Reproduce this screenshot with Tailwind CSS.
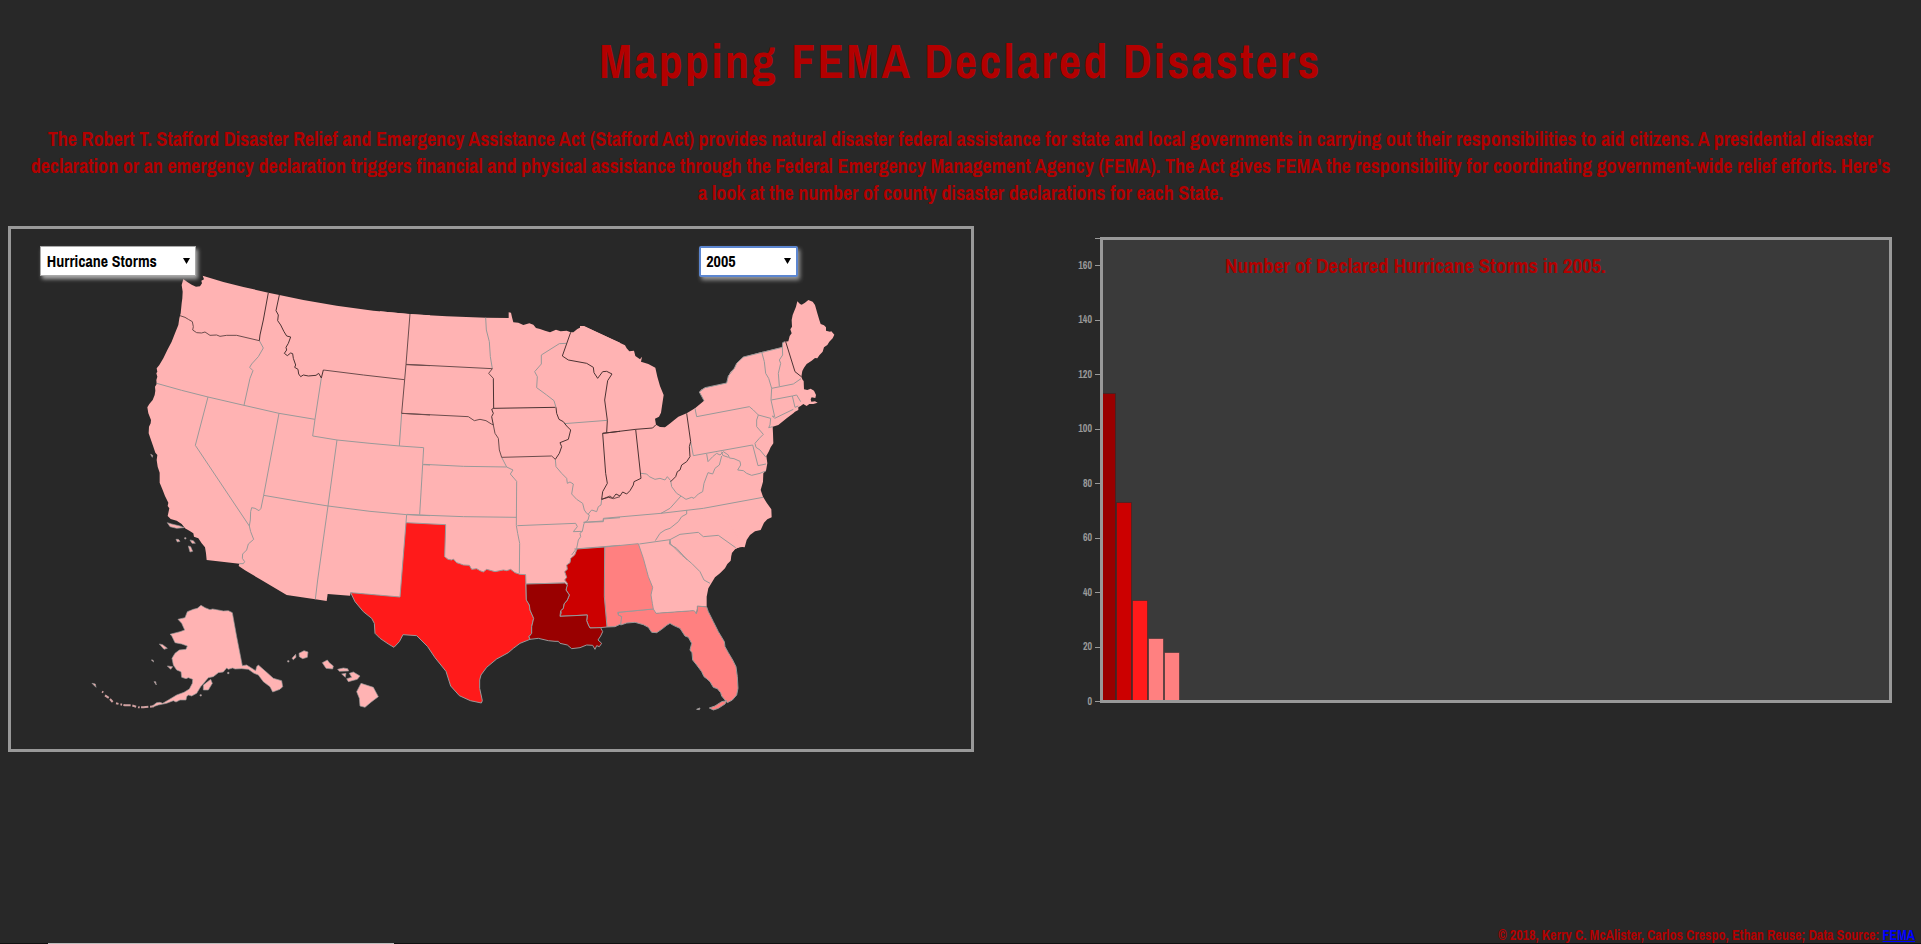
<!DOCTYPE html>
<html lang="en">
<head>
<meta charset="utf-8">
<meta name="viewport" content="width=device-width, initial-scale=1">
<title>Mapping FEMA Declared Disasters</title>
<script src="https://cdn.jsdelivr.net/npm/@tailwindcss/browser@4"></script>
</head>
<body class="bg-[#282828] text-[#b30000] font-bold font-['Archivo_Narrow','Liberation_Sans_Narrow','Liberation_Sans',sans-serif]">
<div class="relative flex min-h-screen flex-col px-2">
  <header class="text-center">
    <h1 class="pt-[33px] text-[48px] leading-[56px] tracking-wider">Mapping FEMA Declared Disasters</h1>
    <p class="mt-9 text-[20px] leading-[27px]">The Robert T. Stafford Disaster Relief and Emergency Assistance Act (Stafford Act) provides natural disaster federal assistance for state and local governments in carrying out their responsibilities to aid citizens. A presidential disaster declaration or an emergency declaration triggers financial and physical assistance through the Federal Emergency Management Agency (FEMA). The Act gives FEMA the responsibility for coordinating government-wide relief efforts. Here's a&nbsp;look at the number of county disaster declarations for each State.</p>
  </header>

  <main class="mt-5 grid items-start lg:grid-cols-[966fr_939fr]">
    <section class="relative border-3 border-[#999]" aria-label="Map of declarations">
      <svg class="block w-full" viewBox="11 229 960 520" stroke-linejoin="round" role="img" aria-label="United States by number of declarations">
        <!-- land -->
        <g fill="#ffb3b3" stroke="#999" stroke-width="2">
          <g stroke="none">
            <path transform="translate(130 260) scale(.33333)" d="M160 57L172 66 185 74 198 80 210 79 216 70 214 62 222 58 218 47 280 66 340 81 415 98 448 105 520 120 620 137 730 152 840 162 900 166 900 1012 810 1012 662 998 660 1007 593 1002 590 1023 556 1018 470 1005 389 957 345 931 326 918 328 911 250 902 230 900 228 880 225 862 215 850 205 835 192 830 190 820 178 812 165 805 155 792 140 782 122 777 113 768 118 745 113 738 115 728 105 708 98 690 89 668 89 638 83 620 80 600 82 585 76 578 70 560 63 540 56 520 57 500 62 490 63 480 55 460 52 442 58 432 68 420 74 405 76 392 75 380 80 372 79 360 82 350 79 340 82 335 80 325 88 315 100 295 112 270 125 245 135 220 145 195 148 175 152 160 155 130 157 115 158 95 155 75Z"/>
            <path transform="translate(380 290) scale(.33333)" d="M0 64L91 73 200 79 317 83 386 84 386 67 393 68 396 82 400 97 415 98 430 105 448 100 460 104 468 114 480 117 495 122 510 127 528 119 542 124 560 122 572 127 580 127 592 117 610 108 720 158 720 960 0 960Z"/>
            <path transform="translate(580 300) scale(.33333)" d="M0 78L12 78 135 136 140 145 148 154 162 152 166 168 180 178 186 170 183 185 205 192 226 203 232 230 240 258 251 285 246 318 243 338 237 350 225 356 228 374 240 381 255 382 268 372 280 362 295 350 320 340 345 325 365 308 372 302 365 288 358 276 365 268 375 263 440 249 445 228 452 215 463 205 470 190 490 171 545 156 607 142 608 128 615 125 625 124 629 108 635 100 631 88 636 80 635 60 638 45 648 20 652 4 660 12 665 14 675 8 685 0 698 5 705 15 712 40 718 60 722 72 732 76 738 82 738 92 750 95 754 94 763 104 758 115 748 125 742 135 732 142 728 155 718 166 712 175 705 174 695 182 680 192 672 203 667 213 664 230 668 240 671 243 672 268 682 270 692 266 702 272 708 285 706 294 695 292 692 298 694 305 705 304 713 308 700 312 688 312 680 318 670 312 662 318 655 322 655 330 645 335 640 340 620 355 595 375 578 380 579 400 580 430 572 442 566 455 559 468 562 490 558 512 550 520 549 545 542 570 549 590 560 608 574 628 575 652 562 658 552 668 542 690 525 694 510 705 500 720 494 742 480 740 465 748 455 760 450 780 0 780Z"/>
            <path transform="translate(480 500) scale(.33333)" d="M0 0L700 0 793 140 780 142 765 146 755 158 752 182 742 192 735 205 720 220 705 232 695 248 685 265 680 290 680 320 652 318 649 342 640 332 528 340 400 340 0 240Z"/>
          </g>
          <g transform="translate(130 260) scale(.33333)" stroke-width="2">
            <path d="M112 788L125 792 150 798 162 803 140 805 120 800ZM138 838L145 838 150 844 142 846ZM180 840L190 842 196 850 186 850ZM175 858L182 860 188 874 180 876ZM164 833h4v4h-4ZM62 583L68 586 67 592Z"/>
          </g>
          <g transform="translate(80 540) scale(.33333)">
            <path d="M363 196L375 203 390 209 398 207 410 209 430 213 445 212 457 218 470 290 487 377 500 375 527 392 530 380 535 375 560 397 580 415 605 422 608 440 600 448 578 456 570 440 550 425 535 405 522 400 505 388 485 386 465 387 458 384 445 388 440 384 430 396 415 398 400 410 385 413 375 425 362 440 350 460 335 468 325 465 320 470 318 480 300 480 288 486 280 482 260 490 235 495 220 500 218 497 230 488 240 487 248 490 265 480 290 465 312 457 328 447 337 430 338 418 325 413 318 416 305 412 303 395 290 390 280 375 276 355 285 340 298 330 318 328 322 318 305 312 285 308 275 287 270 283 300 275 314 270 305 250 294 238 315 233 322 215 340 208 352 205ZM370 435L392 418 397 430 385 450 370 450ZM238 312L248 314 262 325 252 328ZM262 378L278 380 272 388ZM214 360h5l2 6ZM222 425h5l2 10ZM36 430L46 432 48 442ZM443 397h4v4h-4ZM360 464h4v4h-4Z"/>
            <path fill="none" stroke="#cfa0a0" stroke-width="6" stroke-dasharray="12 5 22 4 5 6" d="M222 499L190 502 175 502 155 496 135 496 108 490M98 486L88 475 75 466M66 455l4 2"/>
            <path d="M657 340L672 332 684 336 682 352 668 356 658 350ZM636 355L647 343 648 352 640 359ZM623 362h4v4h-4ZM727 368L742 360 748 368 760 378 758 387 738 385ZM773 388L790 384 803 386 806 393 778 394ZM785 402L798 400 796 412ZM808 400L820 396 840 408 832 418 805 425 800 416 815 412ZM843 430L880 442 895 470 875 485 855 502 840 498 838 475 830 455Z"/>
          </g>
        </g>
        <!-- state borders -->
        <g fill="none" stroke="#999" stroke-width="3">
          <path transform="translate(130 260) scale(.33333)" d="M388 242L400 264 385 290 365 312 359 322 369 332 360 355 342 436M574 354L555 478 548 528 621 540 720 550 808 558 881 563M815 460L808 558M80 370L155 391 234 411 342 436 447 460 555 478M234 411L196 556 358 798M447 460L401 706 393 745 387 752 375 745 365 743 362 755 361 780 358 798 362 815 371 838 355 852 350 870 338 882 337 895 344 905 340 911 328 911M401 706L500 723 594 738 720 754 830 764 900 767M621 540L594 738 563 960 556 1018M881 563L878 614 869 764M878 614L900 615M830 764L828 788"/>
          <path transform="translate(380 290) scale(.33333)" d="M317 83L319 120 328 155 331 200 337 236M365 502L380 531 399 540 391 552 410 574 409 707M131 523L250 529 380 531M80 673L118 675 250 680 409 682M409 707L413 730 419 760 418 850M412 707L587 700 592 710 580 725 607 724M440 882L556 879M526 508L528 530 545 550 560 565 562 580 570 576 580 582 575 612 590 628 608 640 613 660 620 670 628 675 624 690 612 700 607 724 600 730 602 740 595 750 590 775 575 795M560 160L538 161 484 195 484 222 464 245 472 260 470 293 500 315 522 332 528 352M552 401L682 391M665 628L663 645 655 650 650 665 635 660 625 672M612 697L670 695 670 687 720 683M583 777L720 766"/>
          <path transform="translate(580 300) scale(.33333)" d="M183 520L200 522 208 530 225 538 240 535 255 540 262 530 272 542M272 542L275 560 290 580 303 588 270 625 243 640M303 588L318 598 335 592 342 595 355 582 368 575 372 550 384 518 398 522 405 505 418 495 425 468M332 425L340 467 518 435M345 325L350 350 508 320 520 330 535 345 572 355 570 375 566 383 578 380M535 345L530 360 530 380 550 403 538 415 525 430M518 435L534 497 558 492M525 430L528 442 540 450 558 472M380 462L384 485 398 470 410 460 420 465 430 455 445 465 448 474 462 476 480 484 482 495 473 510 490 512 500 520 515 526 540 520 557 513M425 455L428 466 445 472M10 667L70 663 70 655 243 640 370 625 549 592M320 630L320 642 305 650 295 665 270 685 255 690 240 700 226 722M178 732L270 719 300 703 355 697 370 710 415 706 467 743M270 719L268 732 290 745 322 780M545 156L553 185 557 220 566 235 575 265 573 300 584 350 577 348 584 355 640 328M607 142L608 165 598 180 602 190 595 220 598 258M575 265L640 252 663 236M574 300L637 288 650 285 662 305M637 288L645 322 655 318M375 263L440 249 445 228 463 205 470 190 490 171 607 142 608 128 615 125M372 302L358 276 375 263"/>
          <path transform="translate(480 500) scale(.33333)" d="M570 120L572 132 605 165 635 190 660 215 672 240 690 250"/>
        </g>
        <g fill="none" stroke="#4a3232" stroke-width="3">
          <path transform="translate(130 260) scale(.33333)" stroke="#6b4c4c" d="M150 167L165 172 175 178 187 185 190 200 188 210 200 218 215 219 225 216 240 226 260 225 270 229 290 226 320 226 388 242M580 330L700 345 823 359M840 162L828 314 815 460M828 314L900 317M815 460L900 465"/>
          <path transform="translate(130 260) scale(.33333)" d="M415 98L400 180 390 225 388 242M448 105L438 152 445 165 443 182 452 195 462 215 470 228 482 231 475 250 468 262 470 270 463 280 472 287 482 279 488 281 490 295 497 315 494 322 504 328 506 342 512 350 520 345 535 348 558 346 566 340 574 354 580 330"/>
          <path transform="translate(380 290) scale(.33333)" stroke="#6b4c4c" d="M78 223L337 236 326 250 340 265M65 370L265 380 283 392 300 388 318 392 334 402 340 405 345 430 355 445 358 480 365 502M665 628L690 618 700 626 720 620M365 502L515 498 526 508"/>
          <path transform="translate(380 290) scale(.33333)" d="M340 265L341 355 526 352M341 355L335 358 340 370 335 380 340 405M528 352L530 370 537 388 550 395 560 408 572 420 565 448 540 458 545 470 538 490 526 508M572 127L547 198 565 210 620 220 640 232 642 248 653 265 668 245 680 244 696 252 683 272 674 330 682 391 680 428M668 430L720 424M668 430L677 550 682 580 668 605 665 628"/>
          <path transform="translate(580 300) scale(.33333)" d="M68 400L167 388 218 384 228 374M167 388L183 535 162 545 160 555 150 572 140 582 128 576 120 588 108 582 98 595 85 592 65 598M320 340L332 425 328 440 330 470 320 485 305 495 300 510 292 515 287 530 272 545M617 125L645 215 664 230"/>
        </g>
        <!-- states with declarations -->
        <g stroke="#999" stroke-width="3">
          <path fill="#ff1a1a" transform="translate(380 290) scale(.33333)" d="M78 698L197 704 194 800 204 808 215 810 220 807 230 818 242 822 250 825 268 826 275 838 290 836 300 842 310 846 320 838 345 845 370 840 380 842 392 838 405 848 420 853 437 854 439 930 448 945 450 960 461 985 455 1010 455 1030 447 1040 450 1048 420 1060 400 1075 385 1088 350 1107 320 1132 303 1155 299 1170 299 1195 307 1232 304 1239 271 1232 238 1217 212 1188 198 1144 165 1103 143 1070 110 1037 69 1034 58 1055 42 1072 25 1062 0 1045 -15 1030 -17 1000 -25 985 -50 965 -75 935 -88 908 60 921Z"/>
          <g transform="translate(480 500) scale(.33333)">
            <path fill="#ff8080" d="M415 337L520 327 528 340 640 332 645 334 649 342 652 332 652 318 680 321 685 335 700 365 715 395 733 425 735 440 745 458 758 480 768 500 772 530 774 565 770 585 757 600 742 608 735 600 725 588 722 578 712 566 700 562 690 545 680 536 672 530 665 515 650 495 638 480 636 458 630 450 635 430 625 412 615 408 600 385 580 376 570 370 560 376 545 388 530 398 515 397 505 382 490 374 465 367 440 369 422 375 422 360 425 350 415 345Z"/>
            <path fill="#ff8080" d="M740 602L725 605 705 618 688 624 700 630 715 625 735 612ZM650 628L660 624 658 629Z"/>
            <path fill="#ff8080" d="M374 141L475 131 490 175 505 230 518 262 513 285 517 310 520 327 413 337 415 345 425 350 422 372 405 380 381 381 373 290Z"/>
            <path fill="#cc0000" d="M291 147L374 141 373 290 381 381 350 384 330 384 325 375 320 362 322 345 240 349 244 338 242 332 250 325 252 312 262 300 268 285 258 270 262 250 254 240 260 232 254 215 262 208 260 195 270 188 272 175 284 165Z"/>
            <path fill="#990000" d="M138 252L254 249 262 255 258 270 268 285 262 300 252 312 250 325 242 332 240 349 322 345 320 362 325 375 330 384 362 383 368 395 362 408 354 420 365 430 358 440 350 437 345 448 338 436 320 435 300 443 275 446 262 435 240 430 235 424 225 424 205 422 175 415 150 418 147 410 155 400 155 380 161 355 150 330 148 315 139 300Z"/>
          </g>
        </g>
      </svg>

      <div class="absolute left-[3%] top-[3.200%] text-black">
        <select aria-label="Disaster type" class="h-[30px] w-[156px] appearance-none border border-[#a9a9a9] bg-white pl-[6px] text-[16px] leading-[20px] shadow-[2px_3px_4px_#aaa]">
          <option>Hurricane Storms</option>
        </select>
        <svg class="pointer-events-none absolute right-[6px] top-[12px] h-[6px] w-[7px]" viewBox="0 0 7 6"><path d="M0 0h7L3.500 6z"/></svg>
      </div>
      <div class="absolute left-[71.700%] top-[3.200%] text-black">
        <select aria-label="Year" class="h-[31px] w-[99px] appearance-none rounded-xs border-2 border-[#5c86d0] bg-white pl-[5px] text-[16px] leading-[20px] shadow-[2px_3px_4px_#999]">
          <option>2005</option>
        </select>
        <svg class="pointer-events-none absolute right-[7px] top-[12px] h-[6px] w-[7px]" viewBox="0 0 7 6"><path d="M0 0h7L3.500 6z"/></svg>
      </div>
    </section>

    <section aria-label="Chart of declarations">
      <svg class="block w-full overflow-visible" viewBox="974 226 939 526" role="img" aria-label="Bar chart">
        <path fill="#3a3a3a" d="M1101 238h790v464h-790z"/>
        <g stroke="#282828" stroke-opacity=".5">
          <path fill="#990000" d="M1102.500 393.500h13V702h-13z"/>
          <path fill="#cc0000" d="M1116.500 502.500h15V702h-15z"/>
          <path fill="#ff1a1a" d="M1132.500 600.500h15V702h-15z"/>
          <path fill="#ff8080" d="M1148.500 638.500h15V702h-15z"/>
          <path fill="#ff8080" d="M1164.500 652.500h15V702h-15z"/>
        </g>
        <path fill="none" stroke="#999" stroke-width="3" d="M1101.500 238.500h789v463h-789z"/>
        <path stroke="#999" d="M1095 238.500h6M1095 265.500h6M1095 320.500h6M1095 374.500h6M1095 429.500h6M1095 483.500h6M1095 538.500h6M1095 592.500h6M1095 647.500h6M1095 701.500h6"/>
        <g class="text-[10px]" fill="#999" text-anchor="end">
          <text x="1092" y="269">160</text><text x="1092" y="323">140</text><text x="1092" y="378">120</text><text x="1092" y="432">100</text><text x="1092" y="487">80</text><text x="1092" y="541">60</text><text x="1092" y="596">40</text><text x="1092" y="650">20</text><text x="1092" y="705">0</text>
        </g>
        <text class="text-[21px]" fill="#b30000" x="1225" y="273">Number of Declared Hurricane Storms in 2005.</text>
      </svg>
    </section>
  </main>

  <footer class="-mr-0.5 mt-auto text-right text-[14px] leading-[18px]">© 2018, Kerry C. McAlister, Carlos Crespo, Ethan Reuse; Data Source: <a class="text-[#0000ff] underline" href="https://www.fema.gov">FEMA</a></footer>
  <div class="absolute inset-x-0 bottom-0 flex h-px bg-[#111]"><span class="ml-[2.500%] w-[18%] bg-[#bbb]"></span></div>
</div>
</body>
</html>
